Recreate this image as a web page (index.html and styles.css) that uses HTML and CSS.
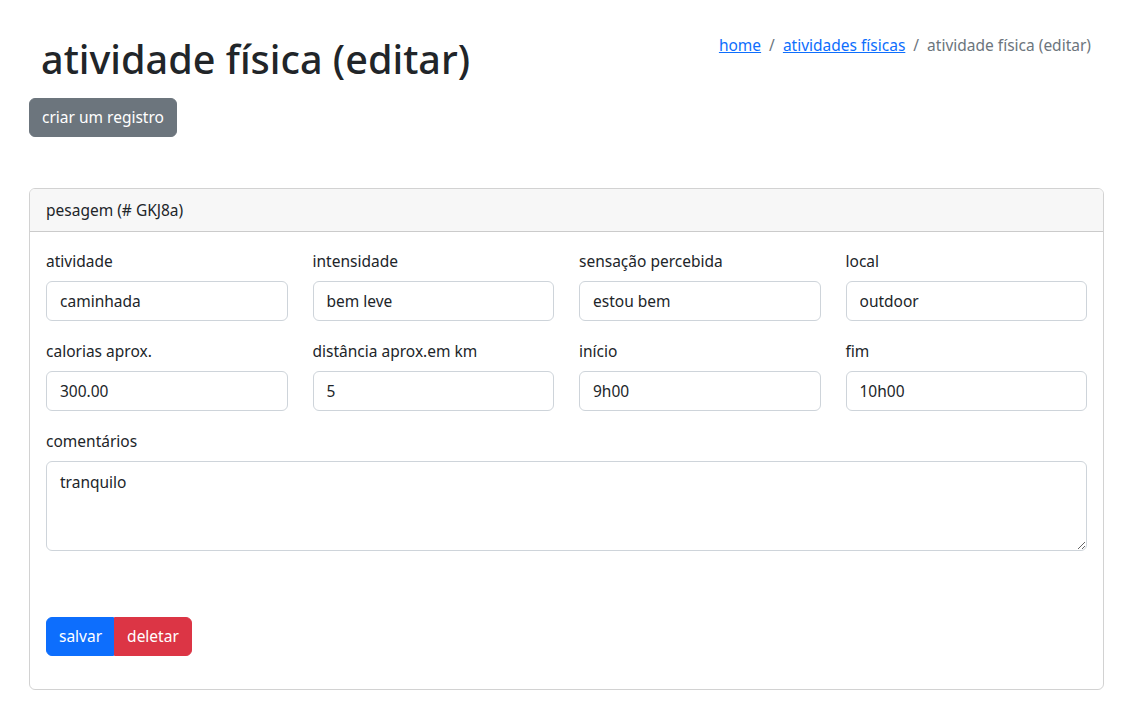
FILE: index.html
```html
<!DOCTYPE html>
<html lang="pt">
<head>
<meta charset="utf-8">
<title>atividade física (editar)</title>
<link rel="stylesheet" href="styles.css">
</head>
<body>
<div class="page">
  <div class="top">
    <h1 class="title">atividade física (editar)</h1>
    <nav class="crumbs">
      <a href="#">home</a><span class="sep">/</span><a href="#">atividades físicas</a><span class="sep">/</span><span class="active">atividade física (editar)</span>
    </nav>
  </div>
  <button class="btn btn-gray">criar um registro</button>

  <div class="card">
    <div class="card-header">pesagem (# GKJ8a)</div>
    <div class="card-body">
      <div class="grid">
        <div class="field"><label>atividade</label><input class="control" value="caminhada"></div>
        <div class="field"><label>intensidade</label><input class="control" value="bem leve"></div>
        <div class="field"><label>sensação percebida</label><input class="control" value="estou bem"></div>
        <div class="field"><label>local</label><input class="control" value="outdoor"></div>
        <div class="field"><label>calorias aprox.</label><input class="control" value="300.00"></div>
        <div class="field"><label>distância aprox.em km</label><input class="control" value="5"></div>
        <div class="field"><label>início</label><input class="control" value="9h00"></div>
        <div class="field"><label>fim</label><input class="control" value="10h00"></div>
      </div>
      <div class="field wide">
        <label>comentários</label>
        <textarea class="control area">tranquilo</textarea>
      </div>
      <div class="btn-group">
        <button class="btn btn-blue">salvar</button><button class="btn btn-red">deletar</button>
      </div>
    </div>
  </div>
</div>
</body>
</html>
```
FILE: styles.css
```css
* { box-sizing: border-box; }
html, body { margin: 0; background: #fff; }
body {
  font-family: "Noto Sans", "Open Sans", sans-serif;
  font-size: 15.5px;
  line-height: 1.5;
  color: #212529;
}
.page {
  width: 1075px;
  margin-left: 29px;
  padding-top: 29px;
}
.top {
  display: flex;
  justify-content: space-between;
  align-items: flex-start;
}
.title {
  margin: 0 0 9px 0;
  padding-left: 12px;
  font-size: 39.6px;
  font-weight: 500;
  line-height: 60px;
}
.crumbs {
  padding-top: 4px;
  padding-right: 13px;
  line-height: 24px;
  color: #6c757d;
}
.crumbs a { color: #0d6efd; text-decoration: underline; }
.crumbs .sep { padding: 0 8px; color: #6c757d; }
.btn {
  font-family: inherit;
  font-size: 15.5px;
  line-height: 25px;
  padding: 6px 12px;
  border: 1px solid transparent;
  border-radius: 6px;
  color: #fff;
  cursor: pointer;
}
.btn-gray { background: #6c757d; border-color: #6c757d; }
.btn-blue { background: #0d6efd; border-color: #0d6efd; border-radius: 6px 0 0 6px; padding-right: 11px; }
.btn-red { background: #dc3545; border-color: #dc3545; border-radius: 0 6px 6px 0; }
.card {
  margin-top: 51px;
  border: 1px solid rgba(0,0,0,.175);
  border-radius: 6px;
}
.card-header {
  background: #f7f7f7;
  border-bottom: 1px solid rgba(0,0,0,.175);
  border-radius: 5px 5px 0 0;
  padding: 9px 16px 8px;
  line-height: 25px;
}
.card-body { padding: 16px 16px 33px; }
.grid {
  display: grid;
  grid-template-columns: repeat(4, 1fr);
  column-gap: 25px;
  row-gap: 17px;
}
.field label {
  display: block;
  line-height: 25px;
  padding-top: 1px;
  margin-bottom: 7px;
}
.control {
  display: block;
  width: 100%;
  height: 40px;
  padding: 6px 13px;
  font-family: inherit;
  font-size: 15.5px;
  color: #212529;
  border: 1px solid #ced4da;
  border-radius: 6px;
  background: #fff;
}
.wide { margin-top: 17px; }
.area {
  height: 90px;
  resize: vertical;
  padding-top: 8px;
  line-height: 24px;
}
.btn-group {
  display: flex;
  margin-top: 66px;
}
```
